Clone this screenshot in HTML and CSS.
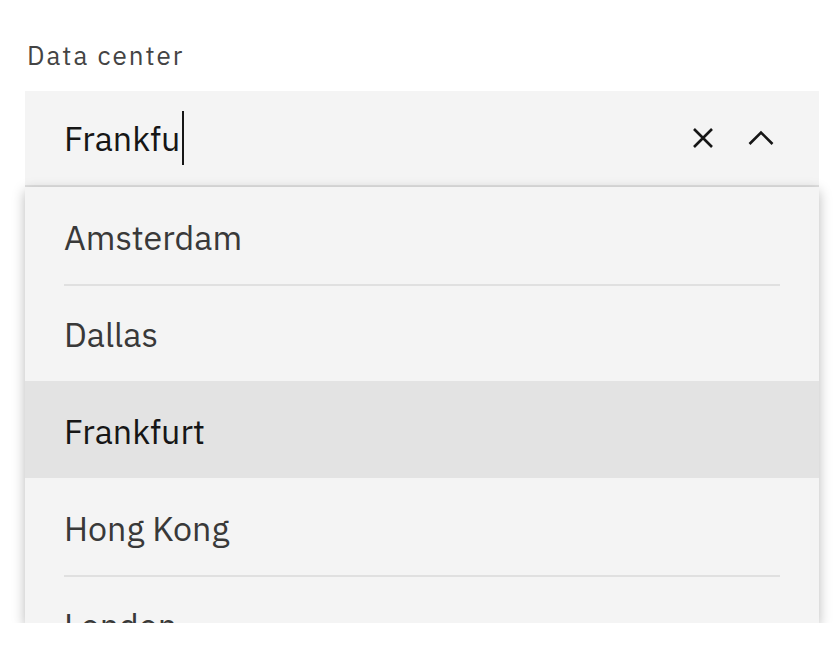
FILE: index.html
```html
<!DOCTYPE html>
<html>
<head>
<meta charset="utf-8">
<link rel="stylesheet" href="styles.css">
</head>
<body>
<div class="wrap">
  <div class="label">Data center</div>
  <div class="combo">
    <div class="field">
      <span class="value">Frankfu</span><span class="caret"></span>
      <span class="spacer"></span>
      <svg class="icon clear" width="22" height="22" viewBox="0 0 22 22"><path d="M2 2 L20 20 M20 2 L2 20" stroke="#161616" stroke-width="2.6" fill="none"/></svg>
      <svg class="icon chev" width="26" height="16" viewBox="0 0 26 16"><path d="M1.5 14 L13 2.5 L24.5 14" stroke="#161616" stroke-width="2.6" fill="none"/></svg>
    </div>
    <div class="menu">
      <div class="item first"><div class="opt">Amsterdam</div></div>
      <div class="item"><div class="opt">Dallas</div></div>
      <div class="item active"><div class="opt">Frankfurt</div></div>
      <div class="item after-active"><div class="opt">Hong Kong</div></div>
      <div class="item"><div class="opt">London</div></div>
    </div>
  </div>
</div>
</body>
</html>
```
FILE: styles.css
```css
* { box-sizing: border-box; }
html, body { margin: 0; padding: 0; background: #ffffff; }
body { font-family: "IBM Plex Sans", "Noto Sans", sans-serif; }
.wrap { padding: 39px 19px 0 25px; width: 838px; }
.label {
  font-size: 26px;
  line-height: 32px;
  color: #444444;
  letter-spacing: 2px;
  padding-left: 2px;
  margin-bottom: 20px;
}
.combo { width: 794px; }
.field {
  height: 96px;
  background: #f4f4f4;
  border-bottom: 2px solid #e0e0e0;
  display: flex;
  align-items: center;
  padding: 0 45px 0 39px;
}
.value {
  font-size: 34px;
  color: #161616;
  line-height: 40px;
}
.caret {
  width: 2px;
  height: 54px;
  background: #161616;
  margin-left: 2px;
}
.spacer { flex: 1; }
.icon { display: block; }
.clear { margin-right: 34px; }
.menu {
  height: 436px;
  overflow: hidden;
  background: #f4f4f4;
  box-shadow: 0 4px 12px rgba(0,0,0,0.28);
}
.item {
  height: 97px;
  padding: 0 39px;
}
.opt {
  height: 97px;
  border-top: 2px solid #e0e0e0;
  display: flex;
  align-items: center;
  font-size: 34px;
  color: #393939;
}
.item.first .opt, .item.active .opt, .item.after-active .opt { border-top-color: transparent; }
.item.active { background: #e3e3e3; }
.item.active .opt { color: #161616; }
```
